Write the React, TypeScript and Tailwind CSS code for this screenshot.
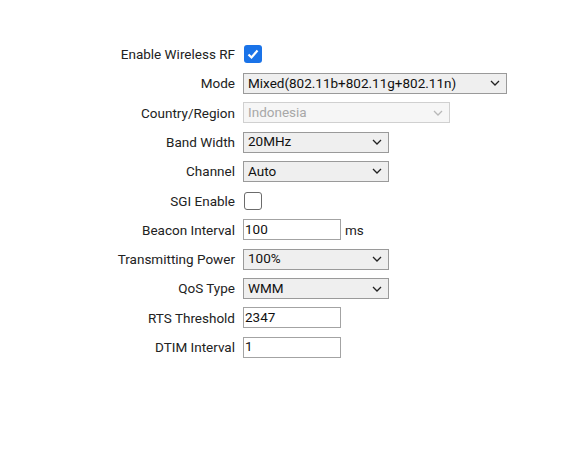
import React from "react";

const Chevron = ({ disabled }: { disabled?: boolean }) => (
  <svg width="10" height="6" viewBox="0 0 10 6" className="shrink-0">
    <path d="M1 1 L5 5 L9 1" fill="none" stroke={disabled ? "#b8b8b8" : "#222"} strokeWidth="1.3" />
  </svg>
);

const Select = ({ value, width, disabled }: { value: string; width: string; disabled?: boolean }) => (
  <div
    className={`flex items-center justify-between h-[21px] pl-[4px] pr-[6px] border ${width} ${
      disabled ? "border-[#d0d0d0] bg-[#f6f6f6] text-[#a8a8a8]" : "border-[#9a9a9a] bg-[#efefef] text-[#111]"
    }`}
  >
    <span className="leading-none">{value}</span>
    <Chevron disabled={disabled} />
  </div>
);

const Input = ({ value }: { value: string }) => (
  <div className="flex items-center h-[21px] w-[98px] border border-[#a3a3a3] bg-white pl-[1px] text-[#111]">
    <span className="leading-none">{value}</span>
  </div>
);

const Row = ({ label, children }: { label: string; children: React.ReactNode }) => (
  <div className="flex items-center h-[29.3px]">
    <div className="w-[235px] text-right text-[#222] whitespace-nowrap">{label}</div>
    <div className="ml-[8px] flex items-center">{children}</div>
  </div>
);

export default function App() {
  return (
    <div
      className="w-[563px] h-[456px] bg-white pt-[39.5px] text-[13.5px]"
      style={{ fontFamily: "Roboto, 'Liberation Sans', sans-serif" }}
    >
      <Row label="Enable Wireless RF">
        <div className="w-[18px] h-[18px] rounded-[3px] bg-[#1a73e8] flex items-center justify-center ml-[1px]">
          <svg width="14" height="14" viewBox="0 0 14 14">
            <path d="M2.5 7.5 L5.5 10.5 L11.5 3.5" fill="none" stroke="white" strokeWidth="2.2" />
          </svg>
        </div>
      </Row>
      <Row label="Mode">
        <Select value="Mixed(802.11b+802.11g+802.11n)" width="w-[264px]" />
      </Row>
      <Row label="Country/Region">
        <Select value="Indonesia" width="w-[207px]" disabled />
      </Row>
      <Row label="Band Width">
        <Select value="20MHz" width="w-[146px]" />
      </Row>
      <Row label="Channel">
        <Select value="Auto" width="w-[146px]" />
      </Row>
      <Row label="SGI Enable">
        <div className="w-[18px] h-[18px] rounded-[3px] border border-[#6b6b6b] bg-white ml-[1px]" />
      </Row>
      <Row label="Beacon Interval">
        <Input value="100" />
        <span className="ml-[4px] text-[#222]">ms</span>
      </Row>
      <Row label="Transmitting Power">
        <Select value="100%" width="w-[146px]" />
      </Row>
      <Row label="QoS Type">
        <Select value="WMM" width="w-[146px]" />
      </Row>
      <Row label="RTS Threshold">
        <Input value="2347" />
      </Row>
      <Row label="DTIM Interval">
        <Input value="1" />
      </Row>
    </div>
  );
}
